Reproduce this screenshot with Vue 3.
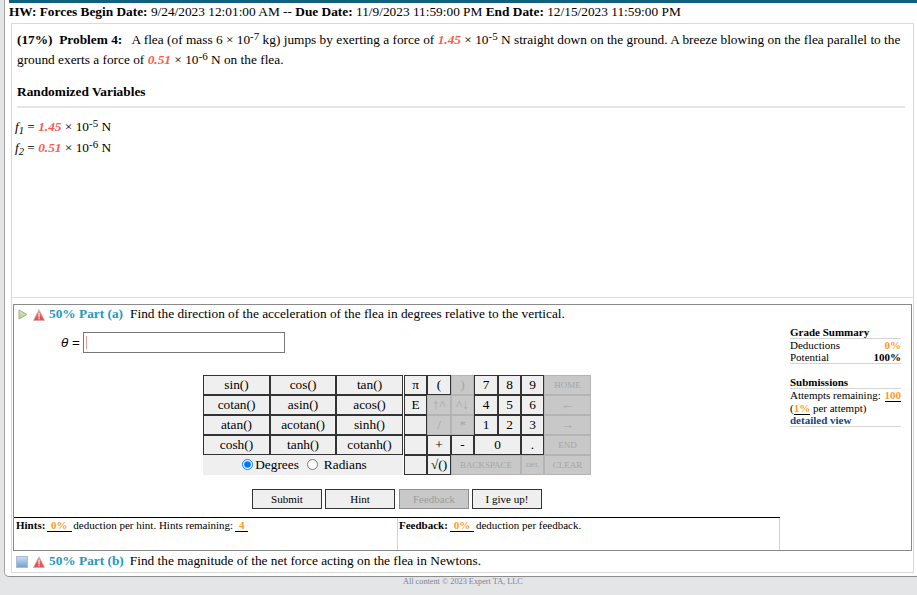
<script setup>
const fnRows = [
  ['sin()', 'cos()', 'tan()'],
  ['cotan()', 'asin()', 'acos()'],
  ['atan()', 'acotan()', 'sinh()'],
  ['cosh()', 'tanh()', 'cotanh()'],
]
const keys = [
  { t: 'π' }, { t: '(' }, { t: ')', off: 1 }, { t: '7' }, { t: '8' }, { t: '9' }, { t: 'HOME', off: 1, small: 1 },
  { t: 'E' }, { t: '↑^', off: 1 }, { t: '^↓', off: 1 }, { t: '4' }, { t: '5' }, { t: '6' }, { t: '←', off: 1 },
  { t: '' }, { t: '/', off: 1 }, { t: '*', off: 1 }, { t: '1' }, { t: '2' }, { t: '3' }, { t: '→', off: 1 },
  { t: '' }, { t: '+' }, { t: '-' }, { t: '0', span: 2 }, { t: '.' }, { t: 'END', off: 1, small: 1 },
  { t: '' }, { t: '√()' }, { t: 'BACKSPACE', off: 1, span: 3, small: 1 }, { t: 'DEL', off: 1, tiny: 1 }, { t: 'CLEAR', off: 1, small: 1 },
]
</script>

<template>
  <div class="page">
    <svg width="0" height="0" class="defs">
      <defs>
        <linearGradient id="warnFill" x1="0" y1="0" x2="0" y2="1">
          <stop offset="0" stop-color="#f6c4c4" />
          <stop offset=".45" stop-color="#ee5f66" />
          <stop offset="1" stop-color="#e2474f" />
        </linearGradient>
        <linearGradient id="saveFill" x1="0" y1="0" x2="0" y2="1">
          <stop offset="0" stop-color="#cfdff0" />
          <stop offset="1" stop-color="#6f9fd6" />
        </linearGradient>
        <linearGradient id="playFill" x1="0" y1="0" x2="0" y2="1">
          <stop offset="0" stop-color="#dcedbd" />
          <stop offset="1" stop-color="#a9d27c" />
        </linearGradient>
      </defs>
    </svg>
    <div class="teal"></div>
    <div class="hw">
      <b>HW: Forces Begin Date:</b> 9/24/2023 12:01:00 AM -- <b>Due Date:</b> 11/9/2023 11:59:00 PM <b>End Date:</b> 12/15/2023 11:59:00 PM
    </div>

    <div class="box">
      <section class="problem">
        <p class="statement">
          <b>(17%)&nbsp; Problem 4:</b>&nbsp;&nbsp; A flea (of mass 6 × 10<sup>-7</sup> kg) jumps by exerting a force of <em>1.45</em> × 10<sup>-5</sup> N straight down on the ground. A breeze blowing on the flea parallel to the ground exerts a force of <em>0.51</em> × 10<sup>-6</sup> N on the flea.
        </p>
        <h3>Randomized Variables</h3>
        <div class="vars">
          <div><i class="sym">f<sub>1</sub></i> = <em>1.45</em> × 10<sup>-5</sup> N</div>
          <div><i class="sym">f<sub>2</sub></i> = <em>0.51</em> × 10<sup>-6</sup> N</div>
        </div>
      </section>

      <section class="part">
        <div class="work">
          <div class="part-head">
            <svg class="ic-play" width="10" height="11" viewBox="0 0 10 11"><path d="M1 1 L9 5.5 L1 10 Z" fill="url(#playFill)" stroke="#a7ad9c" stroke-width="1" stroke-linejoin="round"/></svg>
            <svg class="ic-warn" width="12" height="12" viewBox="0 0 12 12"><path d="M6 .7 L11.5 11.4 H.5 Z" fill="url(#warnFill)" stroke="#d9a3a3" stroke-width=".8" stroke-linejoin="round"/><path d="M5.5 4h1v4.5h-1zM5.5 9h1v1.3h-1z" fill="#fff"/></svg>
            <span class="pct">50% Part (a)</span>
            <span class="q">Find the direction of the acceleration of the flea in degrees relative to the vertical.</span>
          </div>

          <div class="answer">
            <span class="label"><i>θ</i> =</span>
            <div class="field"><span class="caret"></span></div>
          </div>

          <div class="calc">
            <div class="fn">
              <div class="fn-grid">
                <template v-for="row in fnRows">
                  <button v-for="f in row" :key="f" class="k">{{ f }}</button>
                </template>
              </div>
              <div class="angle">
                <label><input type="radio" name="ang" checked /><span>Degrees</span></label>
                <label class="rad"><input type="radio" name="ang" /><span>Radians</span></label>
              </div>
            </div>
            <div class="keys">
              <button
                v-for="(k, i) in keys"
                :key="i"
                class="k"
                :class="{ off: k.off, small: k.small, tiny: k.tiny, s2: k.span === 2, s3: k.span === 3 }"
              >{{ k.t }}</button>
            </div>
          </div>

          <div class="actions">
            <button class="act">Submit</button>
            <button class="act">Hint</button>
            <button class="act off">Feedback</button>
            <button class="act">I give up!</button>
          </div>

          <div class="notes">
            <div class="note"><b>Hints:</b> <span class="u o">0%</span> deduction per hint. Hints remaining: <span class="u o">4</span></div>
            <div class="note fb"><b>Feedback:</b> <span class="u o">0%</span> deduction per feedback.</div>
          </div>
        </div>

        <aside class="side">
          <div class="sh">Grade Summary</div>
          <div class="sr"><span>Deductions</span><b class="or">0%</b></div>
          <div class="sr last"><span>Potential</span><b>100%</b></div>
          <div class="sh gap">Submissions</div>
          <div class="st">
            <div class="between"><span>Attempts remaining:</span><b class="u2 or">100</b></div>
            <div>(<b class="u2 or">1%</b> per attempt)</div>
            <b class="link">detailed view</b>
          </div>
        </aside>
      </section>

      <section class="partb">
        <svg class="ic-save" width="12" height="12" viewBox="0 0 12 12"><rect x=".5" y=".5" width="11" height="11" fill="url(#saveFill)" stroke="#a9bdd3"/></svg>
        <svg class="ic-warn" width="12" height="12" viewBox="0 0 12 12"><path d="M6 .7 L11.5 11.4 H.5 Z" fill="url(#warnFill)" stroke="#d9a3a3" stroke-width=".8" stroke-linejoin="round"/><path d="M5.5 4h1v4.5h-1zM5.5 9h1v1.3h-1z" fill="#fff"/></svg>
        <span class="pct">50% Part (b)</span>
        <span class="q">Find the magnitude of the net force acting on the flea in Newtons.</span>
      </section>
    </div>
  </div>
  <footer class="foot">All content © 2023 Expert TA, LLC</footer>
</template>

<style>
html, body { margin: 0; background: #e4e5e7; overflow: hidden; }
</style>

<style scoped>
* { box-sizing: border-box; }
.defs { display: block; height: 0; }
.page {
  margin-left: 4px;
  height: 577px;
  padding-left: 4px;
  background: #fff;
  border-left: 1px solid #a5a5a5;
  border-bottom: 1px solid #8c8c8c;
  border-bottom-left-radius: 5px;
  font-family: "Liberation Serif", serif;
  color: #000;
  font-size: 13.33px;
}
.teal { height: 3px; background: #0e6280; }
.hw { height: 20px; font-size: 13.33px; line-height: 17px; white-space: nowrap; }
.box {
  margin-left: 2px;
  margin-right: 3px;
  height: 550px;
  border: 1px solid #d9d9d9;
  display: flex;
  flex-direction: column;
}
.problem {
  height: 274px;
  padding: 6px 5px 0;
  border-bottom: 1px solid #dcdcdc;
}
.statement { margin: 0; line-height: 20px; }
sup { font-size: 11px; line-height: 0; vertical-align: 4px; }
em { color: #ff5a4d; font-weight: bold; font-style: italic; }
h3 { margin: 12px 0 0; font-size: 13.33px; line-height: 20px; }
.vars {
  margin-top: 4px;
  border-top: 2px solid #e6e6e6;
  margin-right: 3px;
  padding-top: 8px;
  line-height: 21px;
}
.sym { margin-left: -2px; }
sub { font-size: 10.5px; line-height: 0; vertical-align: -3px; }
.part {
  margin: 6px 1px 0;
  height: 247px;
  border: 1px solid #8a8a8a;
  display: flex;
}
.work { width: 766px; display: flex; flex-direction: column; }
.part-head, .partb { display: flex; align-items: center; white-space: nowrap; }
.part-head { height: 17px; padding-left: 4px; }
.part-head svg { margin-top: 2px; }
.ic-play { margin-right: 5px; }
.ic-warn { margin-right: 4px; }
.pct { color: #1f99bf; font-weight: bold; margin-right: 6px; }
.part-head .pct { margin-right: 7px; }
.answer { display: flex; align-items: center; height: 21px; margin-top: 10px; padding-left: 47px; }
.label { width: 22px; font-family: "Liberation Sans", sans-serif; font-size: 13.33px; }
.field {
  width: 202px;
  height: 21px;
  border: 1px solid #777;
  padding: 3px 2px;
  background: #fff;
}
.caret { display: block; width: 1px; height: 13px; background: #f29a9a; }
.calc { display: flex; gap: 1px; margin-top: 22px; padding-left: 189px; }
.fn { width: 200px; }
.fn-grid { display: grid; grid-template-columns: 67px 66px 67px; grid-auto-rows: 20px; height: 79px; }
.k {
  font: 13.33px "Liberation Serif", serif;
  color: #000;
  background: #efefef;
  border: 1px solid #333;
  padding: 0;
  margin: 0;
  height: 20px;
  overflow: hidden;
}
.k.off { background: #c8c8c8; color: #a6a6a6; border-color: #b4b4b4; }
.k.small { font-size: 9px; }
.k.tiny { font-size: 7px; }
.s2 { grid-column: span 2; }
.s3 { grid-column: span 3; }
.angle {
  height: 21px;
  background: #efefef;
  display: flex;
  justify-content: center;
  align-items: center;
  padding-left: 3px;
}
.angle label { display: flex; align-items: center; }
.angle input { margin: 0 2px 0 0; width: 11px; height: 11px; }
.angle .rad { margin-left: 8px; }
.angle .rad span { margin-left: 4px; }
.keys {
  display: grid;
  grid-template-columns: 23px 24px 23px 24px 23px 23px 47px;
  grid-auto-rows: 20px;
}
.actions { display: flex; margin-top: 14px; padding-left: 238px; gap: 3px; }
.act {
  width: 70px;
  height: 20px;
  padding: 0;
  font: 11px "Liberation Serif", serif;
  color: #000;
  background: #efefef;
  border: 1px solid #333;
}
.act.off { background: #c8c8c8; color: #9d9d9d; border-color: #8f8f8f; margin-left: 1px; }
.notes { display: flex; margin-top: 8px; height: 33px; border-top: 1px solid #000; }
.note { width: 383px; padding: 1px 2px; font-size: 11px; line-height: 13px; white-space: nowrap; }
.note.fb { border-left: 1px solid #d4d4d4; border-right: 1px solid #d4d4d4; padding-left: 1px; }
.u { display: inline-block; padding: 0 4px; border-bottom: 1px solid #000; line-height: 12px; font-weight: bold; margin: 0 -1px 0 -1px; }
.o, .or { color: #ff9a1f; }
.side { flex: 1; padding: 21px 10px 0; font-size: 11px; line-height: 12px; }
.sh { font-weight: bold; border-bottom: 1px solid #d4d4d4; height: 13px; }
.sh.gap { margin-top: 12px; height: 13px; }
.sr { display: flex; justify-content: space-between; }
.sr.last { border-bottom: 1px solid #d4d4d4; height: 13px; }
.st { border-bottom: 1px solid #d4d4d4; }
.between { display: flex; justify-content: space-between; }
.u2 { border-bottom: 1px solid #000; }
.link { color: #14457f; }
.partb { height: 20px; padding-left: 4px; }
.partb svg { margin-top: 2px; }
.ic-save { margin-right: 5px; }
.foot {
  font: 8.25px "Liberation Serif", serif;
  color: #7f8496;
  margin-left: 403px;
  line-height: 9px;
}
</style>
